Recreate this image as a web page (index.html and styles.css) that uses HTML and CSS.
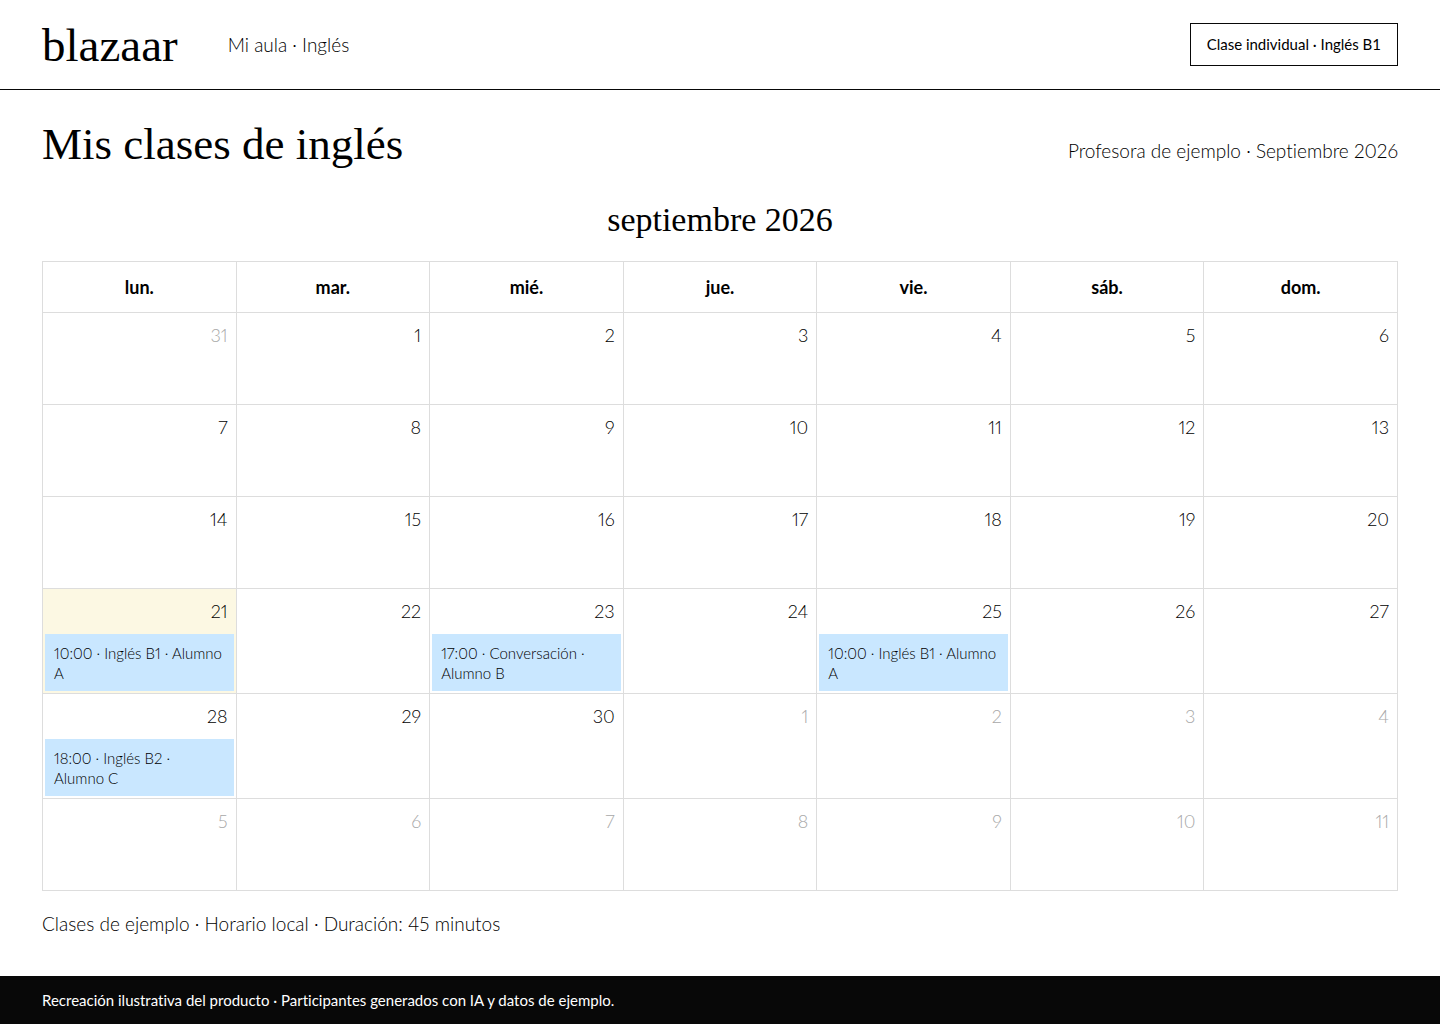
FILE: index.html
```html
<!DOCTYPE html>
<html lang="es">
<head>
    <meta charset="UTF-8">
    <meta name="viewport" content="width=device-width, initial-scale=1.0">
    <title>Mis clases de inglés - blazaar</title>
    <link rel="stylesheet" href="styles.css">
</head>
<body>
    <header class="header">
        <a class="logo" href="#">blazaar</a>
        <span class="section-name">Mi aula · Inglés</span>
        <button class="class-button" type="button">Clase individual · Inglés B1</button>
    </header>

    <main class="container">
        <div class="title-row">
            <h1>Mis clases de inglés</h1>
            <p>Profesora de ejemplo · Septiembre 2026</p>
        </div>

        <table class="calendar">
            <caption>septiembre 2026</caption>
            <thead>
                <tr>
                    <th scope="col">lun.</th>
                    <th scope="col">mar.</th>
                    <th scope="col">mié.</th>
                    <th scope="col">jue.</th>
                    <th scope="col">vie.</th>
                    <th scope="col">sáb.</th>
                    <th scope="col">dom.</th>
                </tr>
            </thead>
            <tbody>
                <tr>
                    <td class="other-month"><span class="day">31</span></td>
                    <td><span class="day">1</span></td>
                    <td><span class="day">2</span></td>
                    <td><span class="day">3</span></td>
                    <td><span class="day">4</span></td>
                    <td><span class="day">5</span></td>
                    <td><span class="day">6</span></td>
                </tr>
                <tr>
                    <td><span class="day">7</span></td>
                    <td><span class="day">8</span></td>
                    <td><span class="day">9</span></td>
                    <td><span class="day">10</span></td>
                    <td><span class="day">11</span></td>
                    <td><span class="day">12</span></td>
                    <td><span class="day">13</span></td>
                </tr>
                <tr>
                    <td><span class="day">14</span></td>
                    <td><span class="day">15</span></td>
                    <td><span class="day">16</span></td>
                    <td><span class="day">17</span></td>
                    <td><span class="day">18</span></td>
                    <td><span class="day">19</span></td>
                    <td><span class="day">20</span></td>
                </tr>
                <tr>
                    <td class="today">
                        <span class="day">21</span>
                        <a class="event" href="#">10:00 · Inglés B1 · Alumno A</a>
                    </td>
                    <td><span class="day">22</span></td>
                    <td>
                        <span class="day">23</span>
                        <a class="event" href="#">17:00 · Conversación · Alumno B</a>
                    </td>
                    <td><span class="day">24</span></td>
                    <td>
                        <span class="day">25</span>
                        <a class="event" href="#">10:00 · Inglés B1 · Alumno A</a>
                    </td>
                    <td><span class="day">26</span></td>
                    <td><span class="day">27</span></td>
                </tr>
                <tr>
                    <td>
                        <span class="day">28</span>
                        <a class="event" href="#">18:00 · Inglés B2 · Alumno&nbsp;C</a>
                    </td>
                    <td><span class="day">29</span></td>
                    <td><span class="day">30</span></td>
                    <td class="other-month"><span class="day">1</span></td>
                    <td class="other-month"><span class="day">2</span></td>
                    <td class="other-month"><span class="day">3</span></td>
                    <td class="other-month"><span class="day">4</span></td>
                </tr>
                <tr>
                    <td class="other-month"><span class="day">5</span></td>
                    <td class="other-month"><span class="day">6</span></td>
                    <td class="other-month"><span class="day">7</span></td>
                    <td class="other-month"><span class="day">8</span></td>
                    <td class="other-month"><span class="day">9</span></td>
                    <td class="other-month"><span class="day">10</span></td>
                    <td class="other-month"><span class="day">11</span></td>
                </tr>
            </tbody>
        </table>

        <p class="note">Clases de ejemplo · Horario local · Duración: 45 minutos</p>
    </main>

    <footer class="footer">
        Recreación ilustrativa del producto · Participantes generados con IA y datos de ejemplo.
    </footer>
</body>
</html>
```
FILE: styles.css
```css
* {
    margin: 0;
    padding: 0;
    box-sizing: border-box;
}

body {
    min-height: 100vh;
    display: flex;
    flex-direction: column;
    background-color: #ffffff;
    color: #000000;
    font-family: 'Sofia Pro', Lato, sans-serif;
    font-size: 19px;
    font-weight: 300;
    line-height: 26px;
    font-variant-ligatures: none;
    font-variant-numeric: proportional-nums;
}

.header {
    display: flex;
    align-items: center;
    gap: 50px;
    height: 90px;
    padding: 0 42px;
    border-bottom: 1px solid #080808;
}

.logo {
    color: inherit;
    font-family: Georgia, 'Liberation Serif', serif;
    font-size: 47px;
    font-weight: 400;
    line-height: 56px;
    text-decoration: none;
}

.class-button {
    margin-left: auto;
    padding: 10px 16px;
    background-color: #ffffff;
    border: 1px solid #080808;
    color: inherit;
    font-family: inherit;
    font-size: 15px;
    font-weight: 400;
    line-height: 21px;
    cursor: pointer;
}

.container {
    flex: 1;
    padding: 26px 42px;
}

.title-row {
    display: flex;
    justify-content: space-between;
    align-items: center;
}

.title-row h1 {
    font-family: Georgia, 'Liberation Serif', serif;
    font-size: 45px;
    font-weight: 400;
    line-height: 56px;
}

.title-row p {
    padding-top: 14px;
}

/* Calendar */
.calendar {
    width: 100%;
    margin-top: 28px;
    border-collapse: collapse;
    table-layout: fixed;
}

.calendar caption {
    padding-bottom: 21px;
    font-family: Georgia, 'Liberation Serif', serif;
    font-size: 34px;
    font-weight: 400;
    line-height: 40px;
}

.calendar th,
.calendar td {
    border: 1px solid #dddddd;
}

.calendar th {
    height: 51px;
    font-size: 18px;
    font-weight: 700;
}

.calendar td {
    height: 92px;
    padding: 0 2px 2px;
    vertical-align: top;
}

.day {
    display: block;
    padding: 9px 6px 10px;
    font-size: 18px;
    text-align: right;
}

.other-month .day {
    color: #a8a8a8;
}

.today {
    background-color: #fcf8e3;
}

.event {
    display: block;
    padding: 9px 2px 8px 9px;
    background-color: #c9e7ff;
    color: inherit;
    font-size: 15px;
    line-height: 20px;
    text-decoration: none;
}

.note {
    margin-top: 20px;
}

.footer {
    padding: 11px 42px;
    background-color: #080808;
    color: #ffffff;
    font-size: 15px;
    font-weight: 400;
}
```
